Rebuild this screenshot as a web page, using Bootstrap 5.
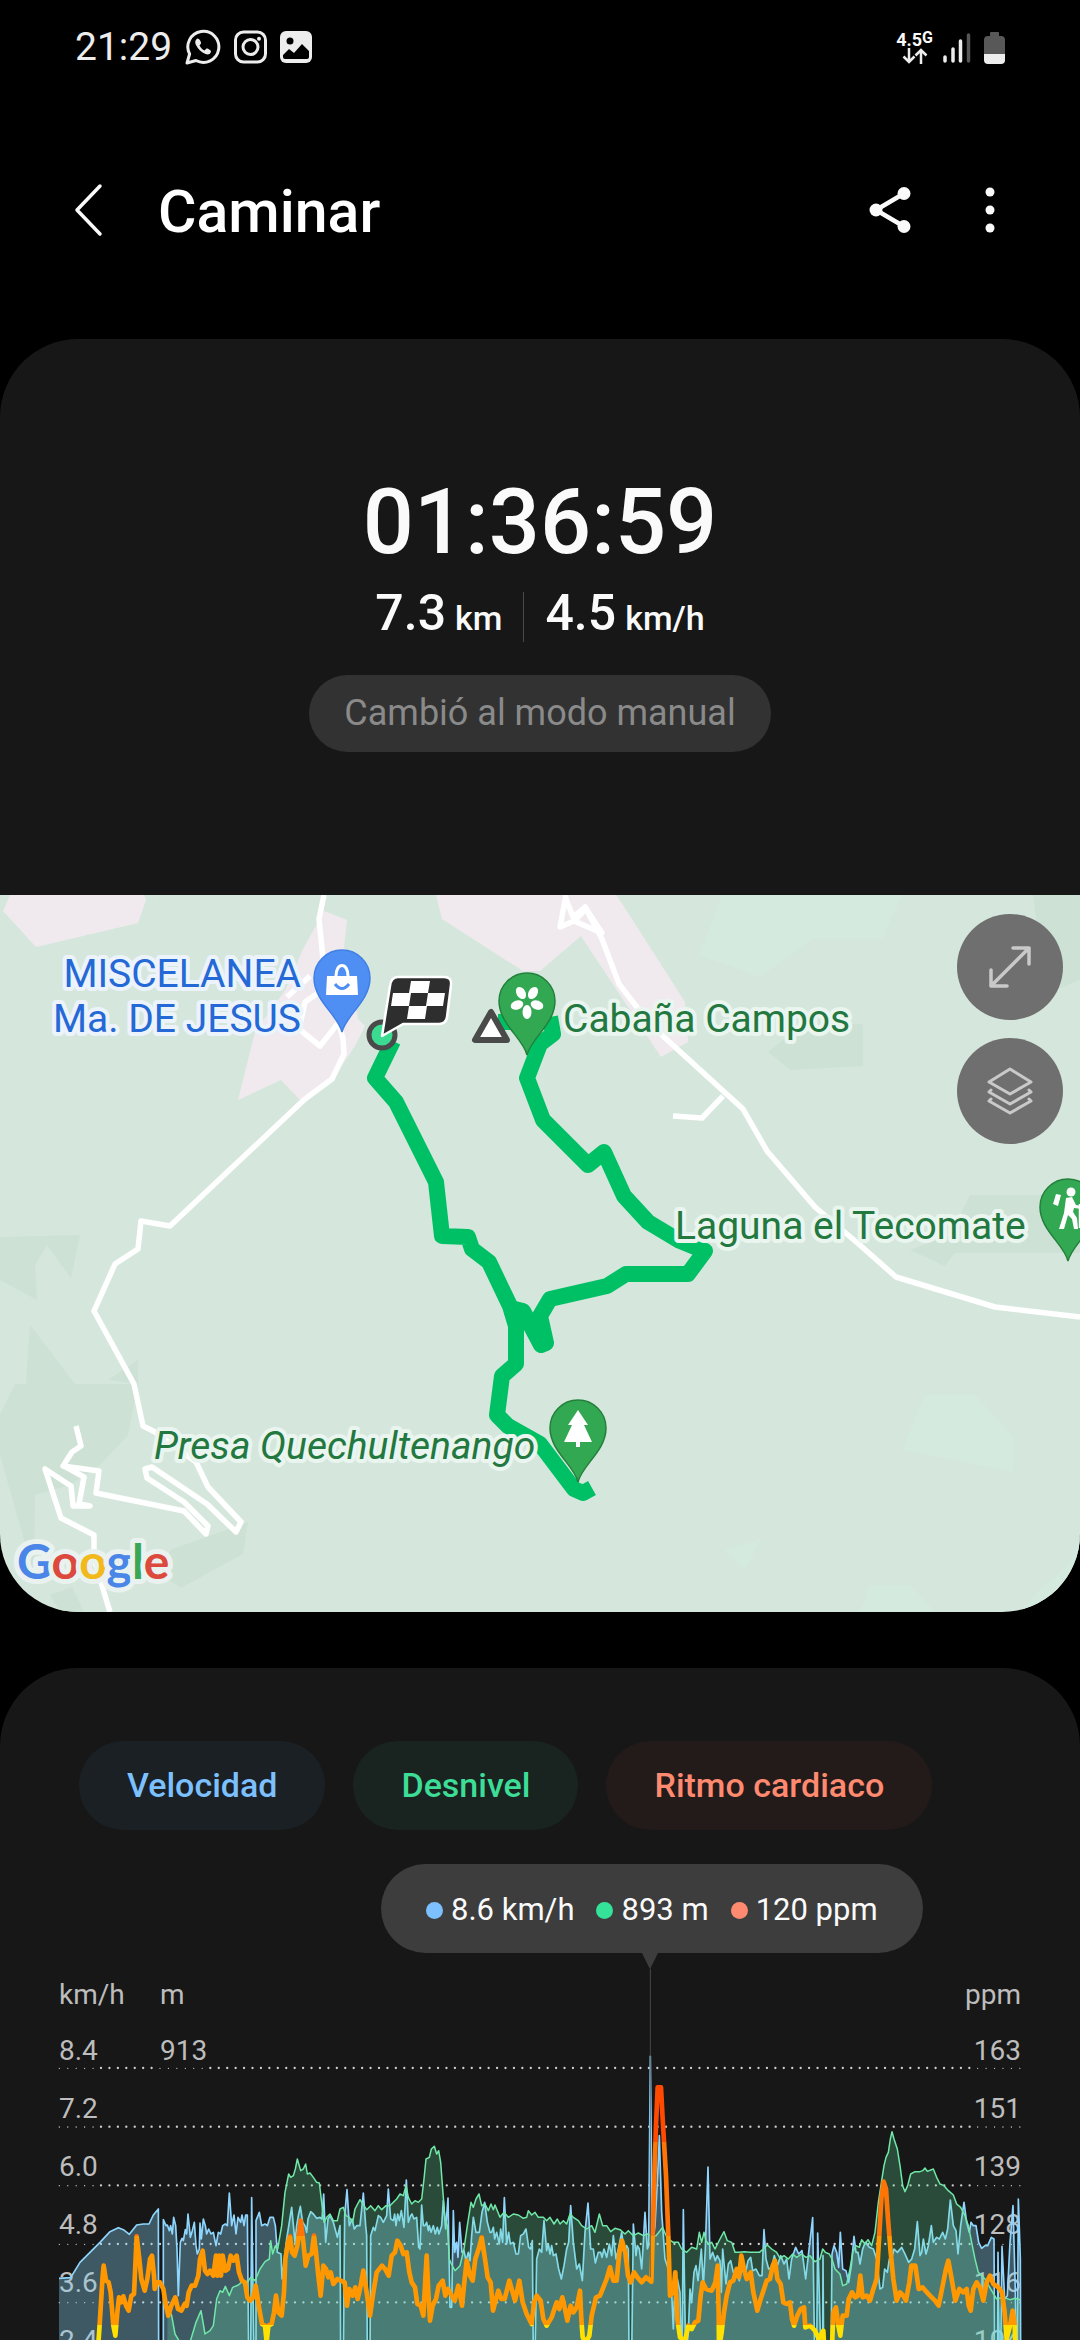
<!DOCTYPE html>
<html lang="es" data-bs-theme="dark">
<head>
<meta charset="utf-8">
<meta name="viewport" content="width=device-width, initial-scale=1">
<title>Caminar</title>
<link href="https://cdn.jsdelivr.net/npm/bootstrap@5.3.0/dist/css/bootstrap.min.css" rel="stylesheet">
<style>
  body { background: #000; color: #fafafa; font-family: Roboto, "Liberation Sans", sans-serif; }
  svg { display: block; }
  .statusbar { height: 94px; padding: 0 75px; }
  .clock { font-size: 39px; color: #ededed; margin-right: 13px; }
  .notices { gap: 13px; }
  .network { font-size: 18px; line-height: 17px; font-weight: 700; margin-right: 9px; }
  .network .gen { font-size: 16px; line-height: 13px; }
  .battery { margin-left: 13px; }
  .topbar { height: 232px; padding: 0 75px 0 64px; margin-bottom: 13px; }
  .topbar h1 { font-size: 59px; font-weight: 500; margin-left: 44px; }
  .icon-btn { color: #fafafa; padding: 0 10px; line-height: 1; border: 0; }
  .more-btn { margin-left: 54px; }
  .panel { background: #171717; }
  .summary { border-radius: 78px 78px 0 0; padding: 132px 0 143px; }
  .duration { font-size: 90px; line-height: 104px; font-weight: 500; }
  .totals { font-size: 50px; line-height: 60px; height: 60px; font-weight: 500; margin-top: 8px; }
  .totals small { font-size: 34px; margin-left: 9px; }
  .totals .vr { height: 40px; color: #fff; opacity: .22; margin: 9px 21px 0; }
  .notice { background: #323232; color: #8a8a8a; font-size: 36px; line-height: 77px; padding: 0 35px; margin-top: 32px; }
  .map-panel { border-radius: 0 0 78px 78px; background: #d5e7dc; }
  .map-tools { padding: 19px 17px; gap: 18px; }
  .map-tools .btn { width: 106px; height: 106px; background: #6f6f6f; color: #c9c9c9; border: 0; }
  .poi { font-size: 39px; paint-order: stroke; stroke: #eaf5ef; stroke-width: 8px; stroke-linejoin: round; fill: #22783f; }
  .poi-shop { fill: #2469d6; stroke: #edf3fb; }
  .logo-text { font-family: Lato, sans-serif; font-weight: 700; font-size: 48px; paint-order: stroke; stroke: #eaf2f0; stroke-width: 10px; stroke-linejoin: round; }
  .trends { border-radius: 78px 78px 0 0; margin-top: 56px; padding-top: 73px; }
  .chips { padding: 0 79px; gap: 28px; }
  .chips .btn { height: 89px; padding: 0 48px; font-size: 34px; font-weight: 500; border: 0; }
  .chip-speed { background: #1b2024; color: #7cc0ff; }
  .chip-climb { background: #19231f; color: #3ddc97; }
  .chip-heart { background: #231b1a; color: #ff8a70; }
  .readout { height: 89px; margin: 34px 0 0 381px; padding: 3px 45px 0; gap: 22px; font-size: 31px; background: #3d3d3d; width: fit-content; }
  .dot { width: 17px; height: 17px; }
  .chart-stack { display: grid; }
  .chart-stack > * { grid-area: 1 / 1; }
  .axes { padding: 15px 59px 0; font-size: 28px; line-height: 58px; color: #bdbdbd; }
  .axes .units { line-height: 54px; }
  .axes .axis-a { width: 101px; }
</style>
<script src="https://cdn.jsdelivr.net/npm/bootstrap@5.3.0/dist/js/bootstrap.bundle.min.js"></script>
</head>
<body class="vh-100 overflow-hidden d-flex flex-column">

<div class="statusbar d-flex align-items-center flex-shrink-0">
  <span class="clock">21:29</span>
  <div class="notices d-flex align-items-center">
    <svg width="36" height="36" viewBox="0 0 36 36" fill="none" stroke="#ededed" stroke-width="3"><path d="M2 34l2.600-9A15.500 15.500 0 1 1 11 31.500z" stroke-linejoin="round"/><path d="M12.500 9.500c-2 1-3 3.500-1.500 6.500 2 4 5.500 7.500 9.500 9 3 1 5 0 5.500-2.500.3-1.200-3.500-3.500-4.500-3l-2 1.900c-2-.8-4-2.800-5-5l1.500-1.900c.5-1-1.500-5.200-3.500-5z" fill="#ededed" stroke="none"/></svg>
    <svg width="33" height="34" viewBox="0 0 33 34" fill="none" stroke="#ededed" stroke-width="3"><rect x="1.500" y="2" width="30" height="30" rx="8"/><circle cx="16.500" cy="17" r="7.500"/><circle cx="25" cy="8.800" r="2" fill="#ededed" stroke="none"/></svg>
    <svg width="32" height="32" viewBox="0 0 32 32"><rect width="32" height="32" rx="6" fill="#ededed"/><circle cx="10" cy="10" r="3.500"/><path d="M3 24l6-6 5 4 8-9 7 7v6q0 2-2 2H5q-2 0-2-2z"/></svg>
  </div>
  <div class="d-flex align-items-center ms-auto">
    <div class="network">
      <div class="d-flex"><span>4.5</span><span class="gen">G</span></div>
      <svg class="mx-auto" width="26" height="16" viewBox="0 0 26 16" fill="none" stroke="#ededed" stroke-width="2.500"><path d="M7 0v14M1.500 8.500L7 14l5.500-5.500M19 16V2M13.500 7.500L19 2l5.500 5.500"/></svg>
    </div>
    <svg width="29" height="31" viewBox="0 0 29 31" stroke-width="3.500" stroke-linecap="round" stroke="#ededed"><path d="M3 25v4M11 17v12M18.500 9v20"/><path d="M26.500 3v26" stroke="#555"/></svg>
    <svg class="battery" width="21" height="33" viewBox="0 0 21 33"><path d="M6 5V2q0-1 1-1h7q1 0 1 1v3h2q4 0 4 4v14H0V9q0-4 4-4z" fill="#585858"/><path d="M0 23h21v6q0 4-4 4H4q-4 0-4-4z" fill="#ededed"/></svg>
  </div>
</div>

<header class="topbar d-flex align-items-center flex-shrink-0">
  <button class="btn icon-btn" type="button" aria-label="Atrás">
    <svg width="30" height="54" viewBox="0 0 30 54" fill="none" stroke="currentColor" stroke-width="3.500" stroke-linecap="round" stroke-linejoin="round"><path d="M26 3L3 27l23 24"/></svg>
  </button>
  <h1 class="mb-0 pt-1">Caminar</h1>
  <button class="btn icon-btn ms-auto" type="button" aria-label="Compartir">
    <svg width="42" height="46" viewBox="0 0 42 46" fill="currentColor"><path d="M35 6.500L7 23l28 16.500" fill="none" stroke="currentColor" stroke-width="4.500"/><circle cx="35" cy="6.500" r="6.500"/><circle cx="7" cy="23" r="6.500"/><circle cx="35" cy="39.500" r="6.500"/></svg>
  </button>
  <button class="btn icon-btn more-btn" type="button" aria-label="Más opciones">
    <svg width="10" height="46" viewBox="0 0 10 46" fill="currentColor"><circle cx="5" cy="5" r="4.500"/><circle cx="5" cy="23" r="4.500"/><circle cx="5" cy="41" r="4.500"/></svg>
  </button>
</header>

<section class="panel summary text-center flex-shrink-0">
  <div class="duration">01:36:59</div>
  <div class="totals d-flex justify-content-center">
    <span>7.3<small>km</small></span><span class="vr"></span><span>4.5<small>km/h</small></span>
  </div>
  <div class="notice rounded-pill d-inline-block align-top">Cambió al modo manual</div>
</section>

<section class="map-panel position-relative overflow-hidden flex-shrink-0">
  <svg class="w-100 h-auto" viewBox="0 0 1080 717">
    <defs>
      <path id="pin" d="M0 54C-4 37-28 23-28 0A28 28 0 1 1 28 0C28 23 4 37 0 54Z"/>
    </defs>
    <g fill="#cde1d5">
      <path d="M15 489H138L128 540 100 570 70 590 35 600 34 680 0 560V520zM30 430L75 489H26zM0 342l80-2-9 43-24-33-12 20 2 35-37-20zM170 655l78-28-5 32-62 34-15-10zM108 485l30-20v24zM50 700l22-8 12 25H60z"/>
      <path d="M768 157l22 18 73-4v-42h-60zM1033 0h47v85l-50 20 10-50zM970 300h110v58H955l-10 13-35-16 40-15z"/>
    </g>
    <g fill="#d5eadf">
      <path d="M722 0h180l-20 44h-68l-55 38-60-22zM925 500h50l38 42v35l-110-22zM725 655l35-10-15 30zM870 690h40l25 27h-75zM1045 690q30-20 35-50v77h-60z"/>
    </g>
    <g fill="#f0eaef">
      <path d="M10 0L3 16l33 36 102-24 8-23-2-5z"/>
      <path d="M324 16l23 9-3 27 14 72 7 7-10 20-20 30-34 25-20-21-43 20 17-68 31-43 17-40z"/>
      <path d="M436 0l6 24 81 52h17l41-35 80 121 27-15-3-40L621 7l-5-7z"/>
    </g>
    <g fill="none" stroke="#fff" stroke-width="5.500" stroke-linejoin="round">
      <path d="M324 0l-5 24 4 40 20 80 1 15-12 25-27 20-135 127-29-5-3 28-23 15-21 47 40 73 9 42 12 6 41 30 12 25 33 35-5 10-29-28-55-37-7 2 2 9 37 24 24 24-2 8-22-23-88-18 3-22-36-5 9-14 9-6-5-20"/>
      <path d="M64 571l20 11-5 27 11 2H73l-2-20-26-17 16 49 33 17v24l16 53"/>
      <path d="M318 98l-13 9-6 27 21 17 19-24M310 81l-23 21"/>
      <path d="M566 0l-6 32 14-6 28 12-17-26-12 10-7-18M574 26l14-14" />
      <path d="M585 12l17 32 17 45 17 22 28 31 79 72 24 42 48 56 46 39 35 31 99 30 85 10M723 201l-21 22-29-2"/>
    </g>
    <g fill="none" stroke="#00c065" stroke-width="16" stroke-linejoin="round">
      <path d="M393 146l-18 37 21 24 40 80 6 54 26 1 4 12 17 13 21 44 6 20v38l-14 12-5 39 11 11 32 18 34 45 9 4 9-5"/>
      <path d="M506 412l17 4 18 34 5-2-6-27 10-17 57-13 19-12h62l17-23-27-11-30-18-24-26-20-44-16 13-45-45-16-42 13-34 13-10-3-17"/>
      <path d="M498 127h20"/>
    </g>
    <g stroke-linejoin="round">
      <path d="M491 117l-16 28h32z" fill="#fff" stroke="#4a4a4a" stroke-width="6"/>
      <circle cx="382" cy="140" r="13" fill="#3bdc92" stroke="#4a4a4a" stroke-width="5"/>
      <path d="M398 82h46q8 0 7 8l-4 32q-1 7-8 7h-36l-21 12 8-50q1-9 8-9z" fill="#2e2e2e" stroke="#fff" stroke-width="2.500"/>
      <path d="M411 86h19l-2 12h17l-2 13h-16l-2 13h-18l2-13h-18l2-13h16z" fill="#fff"/>
      <path d="M411 98h17l-2 13h-17z" fill="#2e2e2e"/>
    </g>
    <g transform="translate(342 83)"><use href="#pin" fill="#4f8ef2" stroke="#3f7fe6" stroke-width="1.500"/><path d="M-15-2h30l1 19h-32z" fill="#fff"/><path d="M-6-2c0-14 12-14 12 0" fill="none" stroke="#fff" stroke-width="3"/><path d="M-7 6q7 9 14 0" fill="none" stroke="#4f8ef2" stroke-width="3"/></g>
    <g transform="translate(527 106)"><use href="#pin" fill="#33a852" stroke="#23803c" stroke-width="1.500"/><g fill="#fff"><ellipse cx="-6" cy="-8" rx="4.500" ry="6.500" transform="rotate(-30 -6 -8)"/><ellipse cx="6" cy="-8" rx="4.500" ry="6.500" transform="rotate(30 6 -8)"/><ellipse cx="-10" cy="4" rx="6.500" ry="4.500" transform="rotate(-20 -10 4)"/><ellipse cx="10" cy="4" rx="6.500" ry="4.500" transform="rotate(20 10 4)"/><ellipse cx="0" cy="11" rx="4.500" ry="7"/></g></g>
    <g transform="translate(578 533)"><use href="#pin" fill="#33a852" stroke="#23803c" stroke-width="1.500"/><path d="M0-18L10-3H6L14 14H2v5h-4v-5h-12L-6-3h-4z" fill="#fff"/></g>
    <g transform="translate(1068 312)"><use href="#pin" fill="#33a852" stroke="#23803c" stroke-width="1.500"/><path d="M-2-9l6-1 4 8 6 1v3l-8-1-1 4 4 6 1 11h-4l-2-10-4-4-4 14h-5l5-16z" fill="#fff"/><path d="M12-3v24" stroke="#fff" stroke-width="2.500"/><path d="M-7-12l-5-1-3 10 5 2z" fill="#fff"/><circle cx="3" cy="-15" r="4.500" fill="#fff"/></g>
    <g class="poi poi-shop" text-anchor="end"><text x="301" y="92">MISCELANEA</text><text x="301" y="137">Ma. DE JESUS</text></g>
    <text class="poi" x="563" y="137">Cabaña Campos</text>
    <text class="poi" x="675" y="344">Laguna el Tecomate</text>
    <text class="poi" x="154" y="564" font-style="italic">Presa Quechultenango</text>
    <text class="logo-text" x="17" y="684"><tspan fill="#4a86e8">G</tspan><tspan fill="#dc4a3d">o</tspan><tspan fill="#f2b91d">o</tspan><tspan fill="#4a86e8">g</tspan><tspan fill="#3aa757">l</tspan><tspan fill="#dc4a3d">e</tspan></text>
  </svg>
  <div class="map-tools position-absolute top-0 end-0 d-flex flex-column">
    <button class="btn rounded-circle d-flex align-items-center justify-content-center p-0" type="button" aria-label="Ampliar mapa">
      <svg width="42" height="42" viewBox="0 0 42 42" fill="none" stroke="currentColor" stroke-width="3.500" stroke-linecap="round" stroke-linejoin="round"><path d="M24 2h16v16M40 2L2 40M2 24v16h16"/></svg>
    </button>
    <button class="btn rounded-circle d-flex align-items-center justify-content-center p-0" type="button" aria-label="Capas">
      <svg width="46" height="48" viewBox="0 0 46 48" fill="none" stroke="currentColor" stroke-width="3" stroke-linecap="round" stroke-linejoin="round"><path d="M23 2l21 13-21 12L2 15zM4 23l-2 2 21 12 21-12-2-2M4 32l-2 2 21 12 21-12-2-2"/></svg>
    </button>
  </div>
</section>

<section class="panel trends flex-grow-1 overflow-hidden">
  <div class="chips d-flex">
    <button class="btn rounded-pill chip-speed" type="button">Velocidad</button>
    <button class="btn rounded-pill chip-climb" type="button">Desnivel</button>
    <button class="btn rounded-pill chip-heart" type="button">Ritmo cardiaco</button>
  </div>
  <div class="readout rounded-pill d-flex align-items-center text-nowrap">
    <span class="d-flex align-items-center gap-2"><i class="dot rounded-circle" style="background:#7cc0ff"></i>8.6 km/h</span>
    <span class="d-flex align-items-center gap-2"><i class="dot rounded-circle" style="background:#35e29a"></i>893 m</span>
    <span class="d-flex align-items-center gap-2"><i class="dot rounded-circle" style="background:#ff8a70"></i>120 ppm</span>
  </div>
  <div class="chart-stack">
    <div class="axes">
      <div class="units d-flex"><span class="axis-a">km/h</span><span>m</span><span class="ms-auto">ppm</span></div>
      <div class="d-flex"><span class="axis-a">8.4</span><span>913</span><span class="ms-auto">163</span></div>
      <div class="d-flex"><span>7.2</span><span class="ms-auto">151</span></div>
      <div class="d-flex"><span>6.0</span><span class="ms-auto">139</span></div>
      <div class="d-flex"><span>4.8</span><span class="ms-auto">128</span></div>
      <div class="d-flex"><span>3.6</span><span class="ms-auto">116</span></div>
      <div class="d-flex"><span>2.4</span><span class="ms-auto">104</span></div>
    </div>
    <svg class="w-100 h-auto" viewBox="0 -18 3240 1188" stroke-linejoin="round">
      <defs>
        <linearGradient id="zones" gradientUnits="userSpaceOnUse" x1="0" y1="0" x2="0" y2="1200">
          <stop offset=".457" stop-color="#ff4a00"/><stop offset=".457" stop-color="#ff7505"/>
          <stop offset=".692" stop-color="#ff7505"/><stop offset=".692" stop-color="#ff9800"/>
          <stop offset=".915" stop-color="#ff9800"/><stop offset=".915" stop-color="#ffe000"/>
        </linearGradient>
      </defs>
      <g id="grid" fill="none" stroke="#cfcfcf" stroke-linecap="round"></g>
      <path id="speedArea" fill="#86d0f3" fill-opacity=".35"/>
      <path id="speedLine" fill="none" stroke="#8fd6ff" stroke-width="5"/>
      <path id="climbArea" fill="#67e7a3" fill-opacity=".25"/>
      <path id="climbLine" fill="none" stroke="#70e8a8" stroke-width="4.500"/>
      <path id="heartLine" fill="none" stroke="url(#zones)" stroke-width="14" stroke-linecap="round"/>
      <path d="M1925-20h50l-25 51z" fill="#3d3d3d"/>
      <path d="M1951 30V955" stroke="#555" stroke-opacity=".8" stroke-width="3"/>
    </svg>
  </div>
</section>

<script>
  // Each series is stored in three consecutive blocks, every block 1080 units wide.
  const speed = [
    "177,958 212,956 240,910 300,850 330,818 355,806 370,812 388,826 410,798 430,795 447,795 460,768 475,750 476,1200 490,1200 490,782 498,800 502,798 508,815 512,800 517,825 521,775 527,800 531,870 535,1010 541,850 546,838 550,845 556,812 560,825 564,765 571,835 577,815 583,790 588,860 592,885 598,870 600,792 604,840 610,780 616,800 620,825 626,810 633,825 640,820 648,860 655,820 662,825 668,800 676,795 682,800 688,702 695,800 702,768 708,825 714,775 722,790 726,768 732,800 737,768 742,768 746,1200 752,1200 755,716 762,1200 768,1200 768,785 778,760 785,800 795,795 802,800 810,775 820,775 826,800 832,880 843,885 846,960 860,840 875,745 885,850 890,800 895,770 901,742 908,790 915,800 920,820 924,780 932,758 940,765 950,778 960,775 966,780 971,705 977,850 984,780 990,770 1000,790 1012,835 1020,800 1022,1200 1030,1200 1034,770 1041,692 1048,800 1056,780 1063,810 1070,800",
    "0,800 10,702 17,800 20,830 22,1200 30,1200 32,830 40,805 45,815 55,770 62,775 70,790 80,770 85,690 92,780 100,785 104,765 108,800 113,765 118,785 124,755 132,805 139,663 145,790 152,770 156,765 162,780 170,775 176,865 180,870 185,738 190,800 195,800 200,790 205,815 208,800 213,820 220,800 226,825 232,805 237,825 245,800 250,725 257,810 264,717 270,1045 275,1045 280,755 284,880 290,850 294,895 299,790 306,880 312,875 318,905 325,880 330,905 335,830 340,775 348,820 358,820 366,760 374,730 382,790 390,820 395,820 400,805 404,840 410,820 418,855 422,810 428,850 433,716 440,855 446,820 451,855 460,850 468,885 475,885 482,830 490,825 498,810 506,865 512,870 517,845 520,1200 525,1200 530,900 538,870 545,880 552,785 560,875 565,855 570,885 575,860 580,890 588,885 596,930 604,960 612,920 620,870 626,850 632,740 640,850 650,930 658,915 667,965 675,820 684,732 692,870 700,870 706,912 715,880 722,880 726,895 732,870 740,895 748,855 755,890 760,830 768,900 775,870 785,820 793,880 800,860 805,870 807,1200 815,1200 820,795 828,890 832,860 838,870 845,930 850,850 855,760 862,870 866,860 871,292 877,860 885,800 893,650 898,530 905,760 915,900 925,930 935,1000 940,1110 945,960 952,960 960,1000 964,1200 967,1100 970,752 977,1200 985,1120 990,990 995,1030 1002,940 1008,920 1014,965 1018,930 1024,870 1030,980 1036,870 1044,624 1050,900 1058,880 1066,905 1072,890",
    "0,905 4,1000 8,870 18,975 25,915 32,905 40,940 50,940 58,965 66,930 75,950 84,905 92,895 98,935 108,930 118,950 126,950 132,812 138,900 146,930 155,925 163,890 172,920 182,890 192,915 200,900 207,960 215,900 227,865 236,885 246,875 257,960 265,890 278,776 284,1200 290,1200 293,822 303,1200 308,1200 309,890 311,1200 333,1200 336,885 342,860 350,880 356,925 361,820 368,930 378,935 386,970 394,920 402,832 408,880 414,880 420,915 428,870 436,850 448,865 460,870 470,900 480,990 488,985 494,930 502,940 508,900 516,895 522,870 532,880 545,865 555,885 566,910 575,900 584,870 592,788 600,890 605,880 610,840 618,885 625,860 634,800 640,850 650,835 658,840 668,820 676,840 683,810 691,723 700,800 708,815 714,885 722,800 732,730 740,790 748,820 753,790 760,800 768,800 776,850 785,868 795,860 803,860 814,835 822,840 824,1200 832,1200 834,880 838,1200 842,1200 846,862 854,1020 862,1010 870,850 879,740 886,1000 889,1200 892,1200 895,720 901,900 902,1200"
  ];
  const climb = [
    "502,1040 515,1070 525,1125 540,1150 570,1150 588,1090 603,1055 615,1125 630,1115 640,1100 650,1020 660,995 668,1000 676,982 688,1010 698,985 715,978 730,965 742,970 752,955 765,965 780,930 795,908 808,900 812,845 818,885 826,860 833,870 845,800 855,700 866,645 872,655 880,650 886,630 892,600 902,635 910,630 917,615 922,645 930,642 940,655 950,670 958,672 965,730 972,790 980,775 990,765 1000,785 1012,785 1020,750 1030,745 1038,770 1048,775 1058,790 1065,750",
    "0,722 12,740 20,752 32,740 45,755 55,740 65,752 78,740 90,740 100,730 110,720 120,705 130,710 138,680 145,715 155,735 165,725 175,730 185,720 192,660 198,600 208,595 214,570 223,562 230,585 236,575 242,610 248,690 255,780 262,800 268,900 274,915 285,935 300,920 312,870 322,800 333,730 340,745 348,720 357,705 365,740 375,735 385,755 393,735 400,752 405,738 412,755 420,775 432,760 445,775 460,765 475,768 490,778 500,775 505,755 515,768 525,760 535,775 550,775 560,785 570,775 582,795 592,780 600,795 610,785 620,795 630,765 640,775 655,785 665,800 680,810 695,800 705,820 718,765 728,800 740,800 752,818 765,808 780,812 795,825 805,815 820,830 835,822 850,830 862,825 875,832 888,830 900,815 908,805 916,825 925,840 940,850 955,850 965,870 980,880 995,865 1010,870 1018,820 1025,850 1032,820 1038,845 1045,855 1055,850 1065,870",
    "0,840 12,818 22,845 35,850 45,880 58,880 72,878 90,880 105,880 118,880 130,870 142,858 155,870 170,880 180,898 192,890 205,900 218,885 230,895 245,885 258,895 270,890 285,908 300,900 308,870 316,880 328,885 336,900 345,930 360,945 368,980 380,975 390,930 398,880 408,860 418,865 425,842 435,855 444,842 455,860 465,820 475,730 485,665 492,620 498,595 505,580 511,540 516,518 522,540 532,570 540,620 548,680 555,698 563,680 572,645 585,638 600,638 608,635 615,627 622,637 640,630 650,655 660,675 672,680 685,695 700,708 710,735 722,745 735,770 745,800 755,850 765,900 775,940 795,960 815,995 830,1020 850,1015 870,1022 885,1018 900,1022"
  ];
  const heart = [
    "294,1170 300,1080 308,950 311,920 318,965 326,970 332,1000 340,1100 346,1130 352,1060 357,1015 364,1030 370,1012 378,1040 386,1055 394,1010 402,1005 406,920 410,832 418,900 424,960 434,995 442,960 450,900 456,890 462,950 464,990 470,970 480,970 490,990 498,1040 505,1070 514,1040 526,1015 534,1050 544,1055 554,1035 560,1040 566,1000 575,980 585,980 595,950 600,900 608,875 615,935 622,945 630,935 640,950 648,890 652,950 658,890 663,950 668,890 676,935 684,930 692,890 700,905 710,890 717,940 726,965 735,970 742,1015 750,1025 760,1015 767,980 778,1050 786,1095 795,1100 800,1150 805,1100 815,1095 822,1060 828,1010 835,1060 845,1070 852,1000 856,900 864,850 870,832 876,880 884,890 892,860 902,785 910,850 917,920 925,890 935,885 942,830 948,880 955,950 962,1010 970,920 978,930 985,955 992,940 1000,975 1012,960 1022,965 1034,970 1041,1040 1048,990 1058,1010 1066,985 1073,1020",
    "0,990 10,935 20,1000 30,1070 40,1000 50,940 66,920 75,930 86,950 95,890 105,880 112,845 122,860 130,885 140,880 148,940 155,970 165,985 172,1035 182,1040 190,1070 196,960 200,890 205,1000 210,1085 218,1040 228,1020 236,980 248,965 256,1010 264,990 275,1010 284,1025 295,980 306,1040 314,960 320,905 330,950 338,965 346,900 356,870 365,835 375,900 383,955 392,970 399,1055 408,1020 415,995 424,1020 434,1020 448,965 458,1000 465,1025 478,965 488,1030 500,1065 515,1095 522,1030 530,1010 542,1025 550,1080 560,1100 575,1075 590,1030 598,1050 607,1015 615,1050 622,1085 632,1040 640,1060 650,1045 660,995 664,1080 668,1135 678,1150 688,1130 695,1070 708,1015 720,1010 730,985 740,960 750,925 760,965 770,965 778,880 786,845 796,880 804,950 812,970 822,940 832,955 845,970 858,955 874,968 880,760 888,500 893,385 903,385 908,480 918,650 925,830 930,1010 940,1000 946,940 952,1080 960,1135 975,1145 985,1100 995,1110 1005,1090 1015,1085 1022,1010 1028,970 1038,990 1055,995 1066,970 1073,920 1076,1060",
    "-3,1170 5,1120 12,1060 20,1010 30,970 40,965 50,930 57,955 64,890 72,930 80,960 92,940 100,1000 112,1055 122,1020 132,990 140,965 150,960 158,920 165,905 172,960 182,975 190,1030 200,1035 210,1030 216,1080 222,1100 232,1070 242,1050 252,1045 256,1105 270,1100 285,1115 296,1140 310,1115 314,1190 335,1190 340,1060 348,1045 355,1100 361,1130 368,1070 380,1070 386,1020 396,1000 406,1015 414,1010 421,950 428,1015 440,1010 450,1025 460,990 470,960 476,860 484,720 491,668 498,690 504,780 512,880 520,960 530,1025 540,1000 550,1010 558,1025 568,970 574,920 586,920 596,990 608,985 616,995 630,1010 645,1025 656,1040 668,980 678,930 685,905 695,960 706,1025 718,990 730,1000 740,990 746,1040 752,1055 760,990 770,970 780,985 790,1025 800,970 810,950 820,975 835,985 846,1000 854,1060 860,1140 870,1100 878,1055 884,1095 886,1170"
  ];
  const join = blocks => blocks.flatMap((block, i) =>
    block.split(" ").map(pair => { const [x, y] = pair.split(",").map(Number); return [x + i * 1080, y]; }));
  const draw = (blocks, line, area) => {
    const pts = join(blocks), d = "M" + pts.map(p => p.join(" ")).join("L");
    document.getElementById(line).setAttribute("d", d);
    if (area) document.getElementById(area).setAttribute("d", d + "V1200H" + pts[0][0] + "Z");
  };
  draw(speed, "speedLine", "speedArea");
  draw(climb, "climbLine", "climbArea");
  draw(heart, "heartLine");

  const seg = (x1, x2, y, w) => `<path d="M${x1} ${y}H${x2}" stroke-width="${w}" stroke-dasharray="0 25.300"/>`;
  document.getElementById("grid").innerHTML = [327, 503, 679, 855, 1030].map((y, i) => {
    const left = i ? 303 : 631;
    return (i ? "" : seg(303, 470, y, 7)) + seg(178, 290, y + 1, 4) + (i ? "" : seg(480, 620, y + 1, 4)) +
      seg(left, 2915, y, 7) + seg(2933, 3064, y + 1, 4);
  }).join("");
</script>
</body>
</html>
